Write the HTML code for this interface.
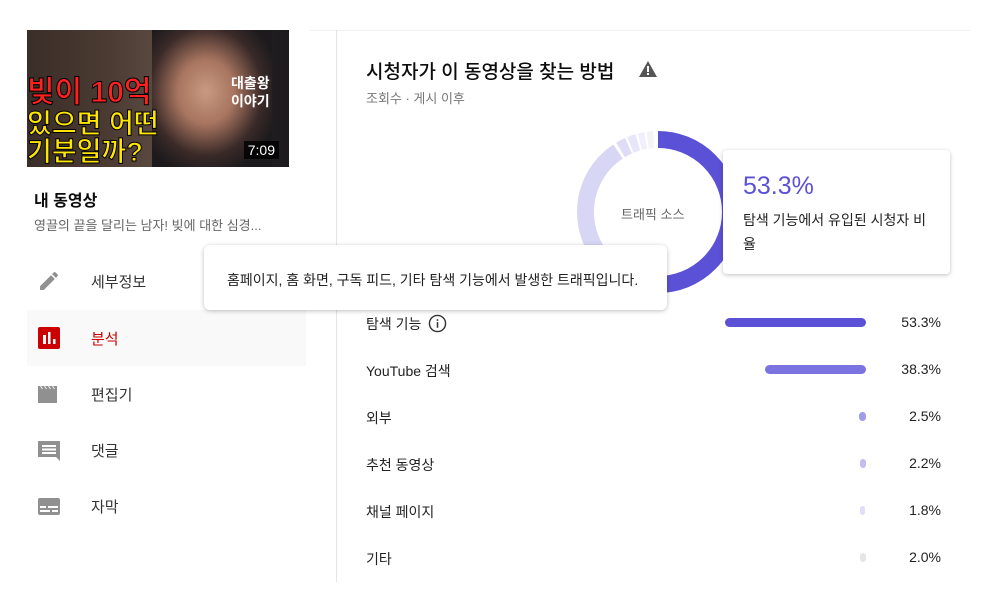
<!DOCTYPE html>
<html><head><meta charset="utf-8"><style>
*{margin:0;padding:0;box-sizing:border-box}
body{width:981px;height:590px;background:#fff;font-family:"Liberation Sans","Noto Sans CJK KR",sans-serif;position:relative;overflow:hidden;color:#0d0d0d}
.abs{position:absolute}
.thumb{left:27px;top:30px;width:262px;height:137px;background:linear-gradient(90deg,#3a2e28 0%,#4a3a32 30%,#5b4a40 50%,#2a2526 75%,#1c1a1c 100%);overflow:hidden}
.nav{left:27px;width:279px;height:56px;display:flex;align-items:center;font-size:15px;color:#333}
.nav .ic{width:24px;height:24px;margin-left:10px;margin-right:30px}
.row{left:366px;width:580px;height:20px;font-size:14px;color:#222}
.pct{position:absolute;right:5px;top:0;font-size:14px}
.bar{position:absolute;top:4px;height:9px;border-radius:5px}
</style></head><body>
<div class="abs" style="left:310px;top:30px;width:660px;height:1px;background:#f0f0f0"></div>
<div class="abs" style="left:336px;top:30px;width:1px;height:552px;background:#e5e5e5"></div>

<div class="abs thumb">
  <div class="abs" style="left:125px;top:0;width:120px;height:137px;background:radial-gradient(ellipse at 45% 45%,#c99a80 0%,#a87560 30%,#3a2a28 60%,#1c1a1c 80%)"></div>
  <div class="abs" style="left:0;top:48px;font-size:30px;font-weight:bold;color:#ff2020;line-height:30px;-webkit-text-stroke:1px #000">빚이 10억</div>
  <div class="abs" style="left:0;top:80px;font-size:27px;font-weight:bold;color:#ffe600;line-height:28px;-webkit-text-stroke:1px #000">있으면 어떤</div>
  <div class="abs" style="left:0;top:108px;font-size:27px;font-weight:bold;color:#ffe600;line-height:28px;-webkit-text-stroke:1px #000">기분일까?</div>
  <div class="abs" style="left:204px;top:44px;font-size:14px;font-weight:bold;color:#fff;line-height:18px">대출왕<br>이야기</div>
  <div class="abs" style="right:10px;bottom:8px;background:rgba(0,0,0,.8);color:#fff;font-size:14px;padding:1px 4px">7:09</div>
</div>

<div class="abs" style="left:34px;top:187px;font-size:16px;font-weight:bold">내 동영상</div>
<div class="abs" style="left:34px;top:215px;font-size:13px;color:#666">영끌의 끝을 달리는 남자! 빚에 대한 심경...</div>

<div class="abs nav" style="top:253px"><svg class="ic" viewBox="0 0 24 24"><path fill="#909090" d="M3 17.25V21h3.75L17.81 9.94l-3.75-3.75L3 17.25zM20.71 7.04a1 1 0 000-1.41l-2.34-2.34a1 1 0 00-1.41 0l-1.83 1.83 3.75 3.75 1.83-1.83z"/></svg>세부정보</div>
<div class="abs nav" style="top:310px;background:#f9f9f9;color:#cc0000"><svg class="ic" viewBox="0 0 24 24"><rect x="1" y="1" width="22" height="22" rx="2" fill="#cc0000"/><rect x="6" y="9" width="3" height="9" fill="#fff"/><rect x="11" y="6" width="2.5" height="12" fill="#fff"/><rect x="16" y="13" width="2.5" height="5" fill="#fff"/></svg>분석</div>
<div class="abs nav" style="top:366px"><svg class="ic" viewBox="0 0 24 24"><path fill="#909090" d="M1 4h2l2 3h1L4 4h3l2 3h1L8 4h3l2 3h1l-2-3h3l2 3h1l-2-3h4v17H1z"/></svg>편집기</div>
<div class="abs nav" style="top:422px"><svg class="ic" viewBox="0 0 24 24"><path fill="#909090" d="M1 3h22v16h0v4l-4-4H1z"/><rect x="5" y="7" width="14" height="2" fill="#fff"/><rect x="5" y="10.5" width="14" height="2" fill="#fff"/><rect x="5" y="14" width="14" height="2" fill="#fff"/></svg>댓글</div>
<div class="abs nav" style="top:478px"><svg class="ic" viewBox="0 0 24 24"><rect x="1" y="4" width="22" height="17" rx="2" fill="#909090"/><rect x="3" y="12" width="6" height="2" fill="#fff"/><rect x="11" y="12" width="10" height="2" fill="#fff"/><rect x="3" y="16" width="10" height="2" fill="#fff"/><rect x="15" y="16" width="6" height="2" fill="#fff"/></svg>자막</div>

<div class="abs" style="left:366px;top:57px;font-size:19px;font-weight:500">시청자가 이 동영상을 찾는 방법</div>
<svg class="abs" style="left:638px;top:60px" width="20" height="18" viewBox="0 0 20 18"><path d="M10 1L19 17H1z" fill="#555"/><rect x="9" y="6" width="2" height="6" fill="#fff"/><rect x="9" y="13" width="2" height="2" fill="#fff"/></svg>
<div class="abs" style="left:366px;top:88px;font-size:13px;color:#777">조회수 · 게시 이후</div>

<svg class="abs" style="left:570px;top:124px" width="176" height="176" viewBox="0 0 176 176">
<g transform="rotate(-90 88 88)" fill="none" stroke-width="17">
<circle cx="88" cy="88" r="72.5" stroke="#5b51d6" stroke-dasharray="241 500" stroke-dashoffset="0"/>
<circle cx="88" cy="88" r="72.5" stroke="#d8d6f5" stroke-dasharray="172 500" stroke-dashoffset="-241"/>
<circle cx="88" cy="88" r="72.5" stroke="#dedcf6" stroke-dasharray="9 500" stroke-dashoffset="-416"/>
<circle cx="88" cy="88" r="72.5" stroke="#e8e7fa" stroke-dasharray="8 500" stroke-dashoffset="-427"/>
<circle cx="88" cy="88" r="72.5" stroke="#f0effb" stroke-dasharray="6 500" stroke-dashoffset="-437"/>
<circle cx="88" cy="88" r="72.5" stroke="#f4f4f6" stroke-dasharray="6 500" stroke-dashoffset="-445"/>
</g></svg>
<div class="abs" style="left:621px;top:204px;font-size:13px;color:#666">트래픽 소스</div>

<div class="abs" style="left:723px;top:150px;width:227px;height:124px;background:#fff;border-radius:4px;box-shadow:0 1px 4px rgba(0,0,0,.25)">
  <div class="abs" style="left:20px;top:22px;font-size:25px;color:#5b51d6">53.3%</div>
  <div class="abs" style="left:20px;top:58px;width:195px;font-size:14px;line-height:24px;color:#222">탐색 기능에서 유입된 시청자 비율</div>
</div>

<div class="abs" style="left:204px;top:245px;width:463px;height:65px;background:#fff;border-radius:6px;box-shadow:0 1px 5px rgba(0,0,0,.25)">
  <div class="abs" style="left:23px;top:25px;font-size:14px;color:#222">홈페이지, 홈 화면, 구독 피드, 기타 탐색 기능에서 발생한 트래픽입니다.</div>
</div>

<div class="abs row" style="top:314px">탐색 기능 <svg style="vertical-align:-4px;margin-left:3px" width="19" height="19" viewBox="0 0 20 20"><circle cx="10" cy="10" r="8.5" fill="none" stroke="#333" stroke-width="1.5"/><rect x="9.2" y="8.5" width="1.6" height="6" fill="#333"/><rect x="9.2" y="5.5" width="1.6" height="1.7" fill="#333"/></svg><div class="bar" style="left:359px;width:141px;background:#5b51d6"></div><div class="pct">53.3%</div></div>
<div class="abs row" style="top:361px">YouTube 검색<div class="bar" style="left:399px;width:101px;background:#7b73e0"></div><div class="pct">38.3%</div></div>
<div class="abs row" style="top:408px">외부<div class="bar" style="left:493px;width:7px;background:#a19be8"></div><div class="pct">2.5%</div></div>
<div class="abs row" style="top:455px">추천 동영상<div class="bar" style="left:494px;width:6px;background:#c2bef0"></div><div class="pct">2.2%</div></div>
<div class="abs row" style="top:502px">채널 페이지<div class="bar" style="left:494px;width:5px;background:#e1dff8"></div><div class="pct">1.8%</div></div>
<div class="abs row" style="top:549px">기타<div class="bar" style="left:494px;width:6px;background:#e6e6e6"></div><div class="pct">2.0%</div></div>
</body></html>
